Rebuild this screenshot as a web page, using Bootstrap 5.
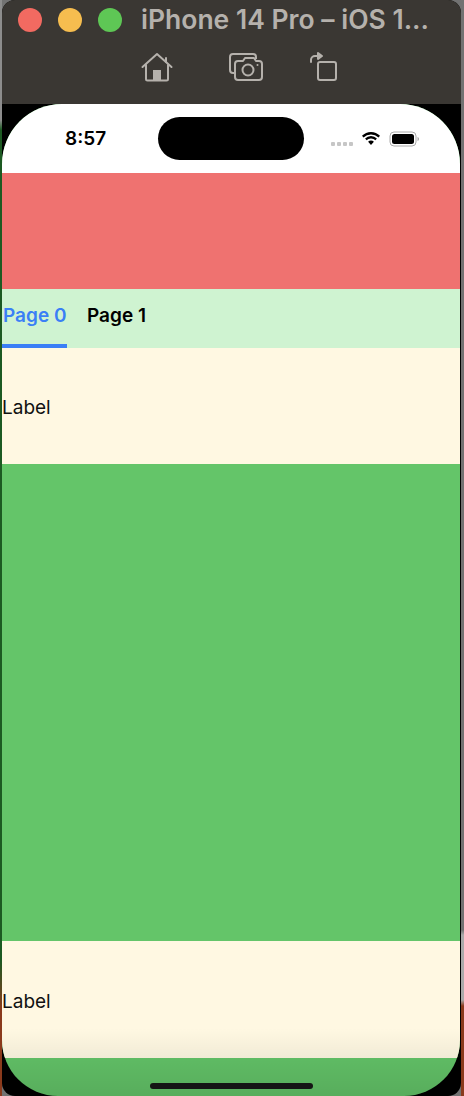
<!DOCTYPE html>
<html lang="en">
<head>
<meta charset="utf-8">
<title>iPhone 14 Pro simulator</title>
<link href="https://cdn.jsdelivr.net/npm/bootstrap@5.3.0/dist/css/bootstrap.min.css" rel="stylesheet">
<style>
html,body{height:100%;}
body{margin:0;overflow:hidden;font-family:"Inter","Liberation Sans",sans-serif;background:linear-gradient(#8d8d8d 0 120px,#1c5a22 130px 960px,#8a3a1c 1010px) left top/2px 100% no-repeat,linear-gradient(#727272 0 930px,#aaa 935px 1000px,#8a3a1c 1006px) right top/3px 100% no-repeat,#727272;}
.sim-window{height:1096px;margin:0 3px 0 2px;background:#000;border-radius:13px;overflow:hidden;}
.sim-bar{height:104px;background:#3a3733;color:#b5b1ac;}
.sim-titlebar{height:40px;padding-left:16px;gap:28px;}
.sim-light{width:24px;height:24px;border-radius:50%;margin-right:-12px;flex:none;}
.sim-title{font-size:26.500px;font-weight:600;margin:0 0 2px 3px;white-space:nowrap;line-height:38px;}
.sim-tools{height:54px;padding-left:139px;}
.sim-tool-gap{margin-left:56px;}
.sim-tool-gap2{margin-left:46px;}
.sim-screen{position:relative;height:992px;margin:0 1px 0 0;border-radius:60px 60px 56px 56px;overflow:hidden;background:#64c569;}
.sim-status{height:69px;background:#fff;padding:0 38px 0 63px;}
.sim-time{font-size:19px;font-weight:600;color:#000;padding-top:1px;}
.sim-island{width:146px;height:43px;border-radius:22px;background:#000;margin-left:52px;}
.sim-dots{gap:2px;margin-left:27px;margin-top:10px;}
.sim-dots i{display:block;width:4px;height:4px;border-radius:1px;background:#c6c6c6;}
.sim-red{height:116px;background:#ef7270;}
.sim-tabs{height:59px;background:#cff3d1;}
.sim-tab{height:59px;padding:0 1px;font-size:19px;font-weight:600;line-height:54px;color:#000;white-space:nowrap;flex:none;}
.sim-tab-on{color:#3a7ff6;border-bottom:4px solid #3a7ff6;width:65px;margin-right:19px;}
.sim-cream{height:116px;background:#fff8e2;color:#111;font-size:19px;padding:4px 0 0 0;}
.sim-cream-b{height:117px;padding-top:5px;}
.sim-green{height:477px;background:#64c569;}
.sim-green2{height:38px;}
.sim-shade{position:absolute;left:0;right:0;bottom:0;height:68px;background:linear-gradient(rgba(0,0,0,0),rgba(0,0,0,.12));}
.sim-home{position:absolute;left:148px;bottom:7px;width:163px;height:6px;border-radius:3px;background:#151515;}
</style>
</head>
<body>
<div class="sim-window">
  <div class="sim-bar">
    <div class="sim-titlebar d-flex align-items-center">
      <span class="sim-light" style="background:#f26a61"></span>
      <span class="sim-light" style="background:#f6bd4f"></span>
      <span class="sim-light" style="background:#5ec755"></span>
      <span class="sim-title">iPhone 14 Pro – iOS 1...</span>
    </div>
    <div class="sim-tools d-flex align-items-center">
      <svg width="32" height="30" viewBox="0 0 32 30" fill="none" stroke="#b5b1ac" stroke-width="2" stroke-linejoin="round" stroke-linecap="round"><path d="M1.500 15 16 2l14.500 13"/><path d="M25 6V10"/><path d="M5 13v14a1.500 1.500 0 0 0 1.500 1.500h19A1.500 1.500 0 0 0 27 27V13"/><rect x="12" y="18" width="8" height="10.500" fill="#b5b1ac" stroke="none"/></svg>
      <svg class="sim-tool-gap" width="34" height="28" viewBox="0 0 34 28" fill="none" stroke="#b5b1ac" stroke-width="2" stroke-linejoin="round"><path d="M6 20H4a3 3 0 0 1-3-3V4a3 3 0 0 1 3-3h20a3 3 0 0 1 3 3v2"/><path d="M9 8h5l2-3h9l2 3h3a3 3 0 0 1 3 3v13a3 3 0 0 1-3 3H9a3 3 0 0 1-3-3V11a3 3 0 0 1 3-3z"/><circle cx="19" cy="17" r="5.500"/><circle cx="28.500" cy="12" r="1" fill="#b5b1ac" stroke="none"/></svg>
      <svg class="sim-tool-gap2" width="28" height="30" viewBox="0 0 28 30" fill="none" stroke="#b5b1ac" stroke-width="2" stroke-linejoin="round" stroke-linecap="round"><rect x="9" y="10" width="18" height="18" rx="2"/><path d="M2 10V8a4 4 0 0 1 4-4h4"/><path d="M9 1l4 3-4 3z" fill="#b5b1ac"/></svg>
    </div>
  </div>
  <div class="sim-screen">
    <div class="sim-status d-flex align-items-center">
      <span class="sim-time">8:57</span>
      <span class="sim-island"></span>
      <span class="sim-dots d-flex"><i></i><i></i><i></i><i></i></span>
      <svg class="ms-2" width="20" height="15" viewBox="0 0 20 15"><path d="M10 3.500a11 11 0 0 1 7.500 3l1.500-1.700A13.500 13.500 0 0 0 10 1 13.500 13.500 0 0 0 1 4.800l1.500 1.700a11 11 0 0 1 7.500-3zM10 7.500a6 6 0 0 1 4.400 1.800l1.500-1.700A8.500 8.500 0 0 0 10 5a8.500 8.500 0 0 0-5.900 2.600l1.500 1.700A6 6 0 0 1 10 7.500zM10 14l2.900-3.200A4 4 0 0 0 10 9.500a4 4 0 0 0-2.900 1.300z" fill="#000"/></svg>
      <svg class="ms-2" width="31" height="16" viewBox="0 0 31 16"><rect x="1" y="1" width="26" height="14" rx="4" fill="none" stroke="#aaa"/><rect x="3" y="3" width="22" height="10" rx="2.500" fill="#000"/><path d="M28.500 6v4c1-.3 1.500-1 1.500-2s-.5-1.700-1.500-2z" fill="#aaa"/></svg>
    </div>
    <div class="sim-red"></div>
    <div class="sim-tabs d-flex">
      <div class="sim-tab sim-tab-on">Page 0</div>
      <div class="sim-tab">Page 1</div>
    </div>
    <div class="sim-cream d-flex align-items-center">Label</div>
    <div class="sim-green"></div>
    <div class="sim-cream sim-cream-b d-flex align-items-center">Label</div>
    <div class="sim-green2"></div>
    <div class="sim-shade"></div>
    <div class="sim-home"></div>
  </div>
</div>
<script src="https://cdn.jsdelivr.net/npm/bootstrap@5.3.0/dist/js/bootstrap.bundle.min.js"></script>
</body>
</html>
